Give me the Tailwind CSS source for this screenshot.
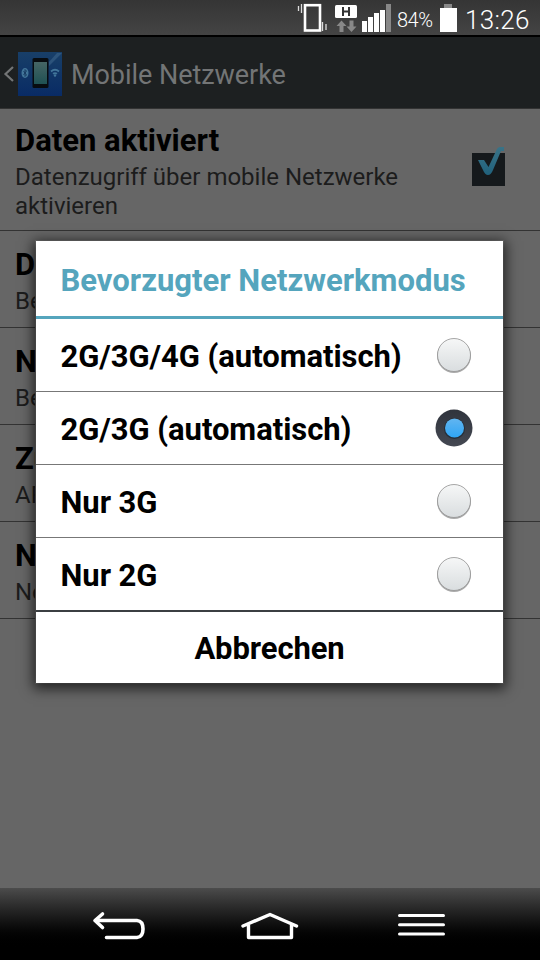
<!DOCTYPE html>
<html lang="de">
<head>
  <meta charset="UTF-8">
  <meta name="viewport" content="width=device-width, initial-scale=1.0">
  <title>Mobile Netzwerke</title>
  <script src="https://cdn.jsdelivr.net/npm/@tailwindcss/browser@4"></script>
</head>
<body class="relative flex h-screen flex-col overflow-hidden bg-[#666] font-[Roboto,sans-serif] text-black">

  <!-- Status bar -->
  <div class="flex h-[37px] shrink-0 items-center justify-end border-b-2 border-black bg-linear-to-b from-[#353535] to-[#444] pr-[11px] text-white">
    <svg class="h-[35px] w-[98px]" viewBox="0 0 98 35" fill="none">
      <path d="M5.500 6v5M8.500 4v9M29.500 22v9M33 24v6" stroke="#ddd" stroke-width="1.300"/>
      <rect x="12" y="5.200" width="15" height="25.300" stroke="#fff" stroke-width="2.600"/>
      <rect x="42" y="5" width="22" height="13" rx="1.500" fill="#fff"/>
      <path d="M50 7v9M56 7v9M50 11.500h6" stroke="#333" stroke-width="2"/>
      <path d="M48.500 20.500l5 5.500h-3v6h-4v-6h-3zM58.500 32l-5-5.500h3v-6h4v6h3z" fill="#888"/>
      <path d="M69 21h5v11h-5zM75 17h5v15h-5zM81 13h5v19h-5zM87 10h5v22h-5z" fill="#fff"/>
      <path d="M93 4h5v28h-5z" fill="#888"/>
    </svg>
    <span class="ml-[6px] w-[37px] whitespace-nowrap pt-1 text-[20px] font-light leading-none tracking-[-0.5px]">84%</span>
    <svg class="ml-[5px] h-[35px] w-[18px]" viewBox="0 0 18 35">
      <path d="M5 4h8v4h4v3H1V8h4z" fill="#888"/>
      <path d="M1 8h17v24H1z" fill="#fff"/>
    </svg>
    <span class="ml-[8px] w-[64px] whitespace-nowrap pt-[4px] text-[26px] font-light leading-none tracking-[0.3px]">13:26</span>
  </div>

  <!-- Title bar -->
  <header class="flex h-[72px] shrink-0 items-center border-b border-[#333] bg-[#1d2021]">
    <svg class="h-[72px] w-[70px] shrink-0" viewBox="0 0 70 72" fill="none">
      <defs>
        <linearGradient id="tile" x2="0" y2="1"><stop stop-color="#183f68"/><stop offset="1" stop-color="#092b65"/></linearGradient>
        <linearGradient id="screen" x2="0" y2="1"><stop stop-color="#466565"/><stop offset="1" stop-color="#1f5153"/></linearGradient>
      </defs>
      <path d="M13 30L5.500 37L13 44" stroke="#737576" stroke-width="2.200"/>
      <rect x="18" y="15" width="44" height="44" fill="url(#tile)"/>
      <path d="M57 16h5L49 29v-4z" fill="#50789a" opacity=".4"/>
      <rect x="32.500" y="21" width="16" height="30" rx="1.500" fill="#080c10"/>
      <rect x="34" y="25" width="13" height="22" fill="url(#screen)"/>
      <ellipse cx="25" cy="36" rx="3.500" ry="5" fill="#42759a"/>
      <path d="M23.500 34l3 4-1.500 1.500v-7l1.500 1.500-3 4" stroke="#12345a" stroke-width=".8"/>
      <path d="M51 34.500q4-3.500 8 0M53 36.800q2-1.500 4 0" stroke="#42759a" stroke-width="1.800"/>
      <circle cx="55" cy="38.500" r="1.200" fill="#42759a"/>
    </svg>
    <h1 class="whitespace-nowrap pl-px pt-[4px] text-[27px] leading-8 tracking-[-0.05px] text-[#737576]">Mobile Netzwerke</h1>
  </header>

  <!-- Settings list -->
  <main class="flex flex-1 flex-col">
    <div class="flex h-[122px] shrink-0 items-start justify-between border-b border-[#333] pl-[15px] pr-[34px] pt-[14px]">
      <div>
        <h2 class="text-[31px] font-bold leading-[35px]">Daten aktiviert</h2>
        <p class="w-[400px] pt-[5px] text-[24px] leading-[29px] text-[#1c1c1c]">Datenzugriff über mobile Netzwerke aktivieren</p>
      </div>
      <svg class="mt-[22px] h-[42px] w-[34px]" viewBox="0 0 34 42" fill="none">
        <defs><linearGradient id="tick" x2="0" y2="1"><stop stop-color="#3a7387"/><stop offset="1" stop-color="#20617c"/></linearGradient></defs>
        <rect y="8" width="33" height="33" fill="#15191c"/>
        <path d="M6 15h6l4.500 7L24 6q1.500-4 4-4h4v4h-3L21 25q-2 5-5 5t-5-5z" fill="url(#tick)"/>
      </svg>
    </div>
    <div class="h-[97px] shrink-0 border-b border-[#333] pl-[15px] pt-[16px]">
      <h2 class="text-[31px] font-bold leading-[35px]">D</h2>
      <p class="pt-[5px] text-[24px] leading-[29px] text-[#1c1c1c]">Be</p>
    </div>
    <div class="h-[97px] shrink-0 border-b border-[#333] pl-[15px] pt-[16px]">
      <h2 class="text-[31px] font-bold leading-[35px]">N</h2>
      <p class="pt-[5px] text-[24px] leading-[29px] text-[#1c1c1c]">Be</p>
    </div>
    <div class="h-[97px] shrink-0 border-b border-[#333] pl-[15px] pt-[16px]">
      <h2 class="text-[31px] font-bold leading-[35px]">Zu</h2>
      <p class="pt-[5px] text-[24px] leading-[29px] text-[#1c1c1c]">AP</p>
    </div>
    <div class="h-[97px] shrink-0 border-b border-[#333] pl-[15px] pt-[16px]">
      <h2 class="text-[31px] font-bold leading-[35px]">N</h2>
      <p class="pt-[5px] text-[24px] leading-[29px] text-[#1c1c1c]">Ne</p>
    </div>
  </main>

  <!-- Navigation bar -->
  <nav class="flex h-[72px] shrink-0 bg-linear-to-b from-[#4c4c4c] to-black to-85%">
    <svg class="h-[72px] w-full" viewBox="0 0 540 72" fill="none" stroke="#fff" stroke-linecap="round" stroke-linejoin="round">
      <path d="M102.500 26L95 32.500L102.500 39.500" stroke-width="3.600"/>
      <path d="M96 32.500H137Q143 33 143 41T137 49.500H106.500" stroke-width="3.600"/>
      <path d="M243 38L270 26.500L296.500 38M248.500 37V49.500H291.500V37" stroke-width="3.400"/>
      <path d="M399.500 27.500H443.500M399.500 36.800H443.500M399.500 46H443.500" stroke-width="3"/>
    </svg>
  </nav>

  <!-- Network mode dialog -->
  <div role="dialog" class="absolute left-[36px] top-[241px] flex h-[442px] w-[467px] flex-col bg-white shadow-[0_3px_12px_3px_rgba(0,0,0,.65),0_0_0_1px_#777]">
    <svg class="size-0 shrink-0"><defs>
      <linearGradient id="off" x2="0" y2="1"><stop stop-color="#f6f7f7"/><stop offset="1" stop-color="#d9dddf"/></linearGradient>
      <linearGradient id="ring" x2="0" y2="1"><stop stop-color="#30343d"/><stop offset="1" stop-color="#444852"/></linearGradient>
      <linearGradient id="dot" x2="0" y2="1"><stop stop-color="#62b5f0"/><stop offset="1" stop-color="#2fa5f5"/></linearGradient>
    </defs></svg>
    <h2 class="flex h-[78px] shrink-0 items-center whitespace-nowrap border-b-3 border-[#55a5bd] pl-[24.5px] pt-[6px] text-[31px] font-bold text-[#55a5bd]">Bevorzugter Netzwerkmodus</h2>
    <div class="flex h-[73px] shrink-0 items-center justify-between border-b border-[#777] pl-[24.5px] pr-[28px] text-[31px] font-bold tracking-[-0.05px]">
      <span class="pt-[5px]">2G/3G/4G (automatisch)</span>
      <span class="size-[42px]"><svg viewBox="0 0 42 42"><circle cx="21" cy="22" r="17" fill="#aaa"/><circle cx="21" cy="21" r="16.500" fill="url(#off)" stroke="#929292" stroke-width=".8"/></svg></span>
    </div>
    <div class="flex h-[73px] shrink-0 items-center justify-between border-b border-[#777] pl-[24.5px] pr-[28px] text-[31px] font-bold tracking-[-0.05px]">
      <span class="pt-[5px]">2G/3G (automatisch)</span>
      <span class="size-[42px]"><svg viewBox="0 0 42 42"><circle cx="21" cy="21" r="18.500" fill="url(#ring)"/><circle cx="21.500" cy="21.500" r="10.500" fill="#262e38"/><circle cx="21.500" cy="21" r="9.500" fill="url(#dot)"/></svg></span>
    </div>
    <div class="flex h-[73px] shrink-0 items-center justify-between border-b border-[#777] pl-[24.5px] pr-[28px] text-[31px] font-bold tracking-[-0.05px]">
      <span class="pt-[5px]">Nur 3G</span>
      <span class="size-[42px]"><svg viewBox="0 0 42 42"><circle cx="21" cy="22" r="17" fill="#aaa"/><circle cx="21" cy="21" r="16.500" fill="url(#off)" stroke="#929292" stroke-width=".8"/></svg></span>
    </div>
    <div class="flex h-[74px] shrink-0 items-center justify-between border-b-2 border-[#3b3f42] pl-[24.5px] pr-[28px] text-[31px] font-bold tracking-[-0.05px]">
      <span class="pt-[5px]">Nur 2G</span>
      <span class="size-[42px]"><svg viewBox="0 0 42 42"><circle cx="21" cy="22" r="17" fill="#aaa"/><circle cx="21" cy="21" r="16.500" fill="url(#off)" stroke="#929292" stroke-width=".8"/></svg></span>
    </div>
    <button class="flex-1 pt-[3px] text-[31px] font-bold tracking-[-0.1px]">Abbrechen</button>
  </div>

</body>
</html>
